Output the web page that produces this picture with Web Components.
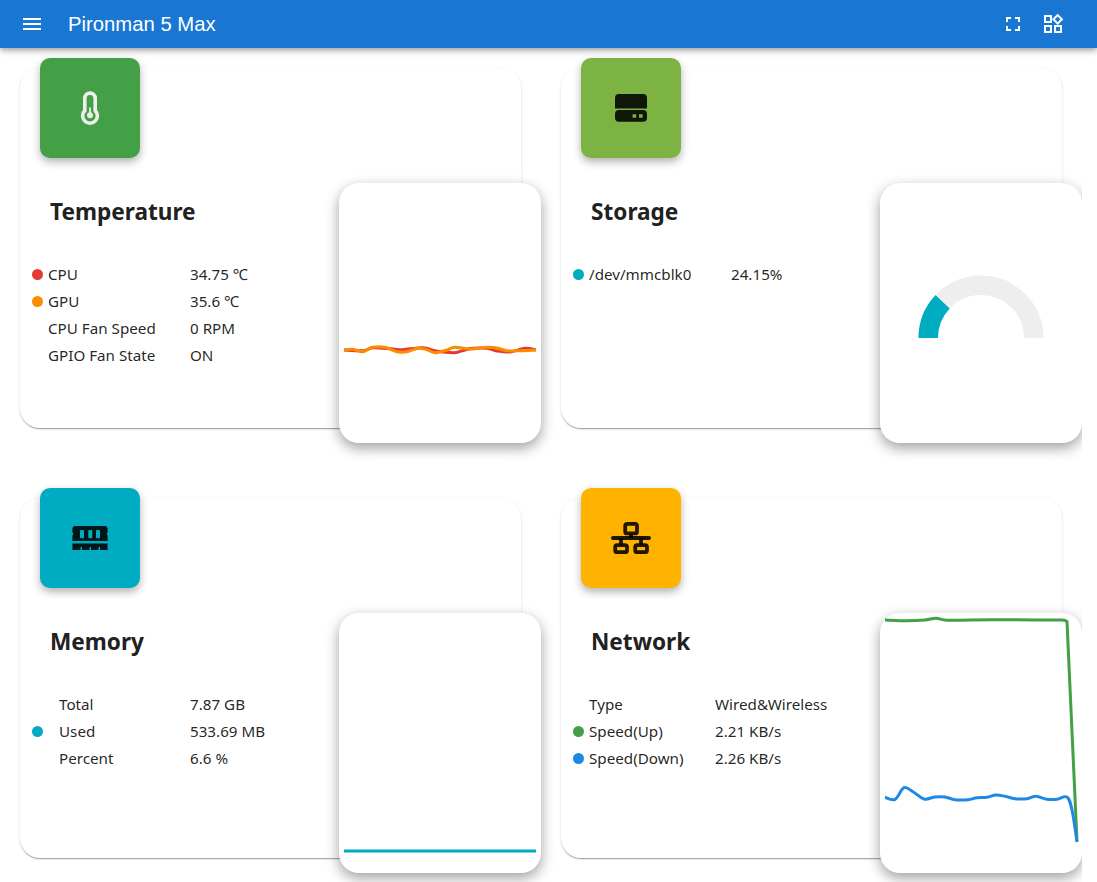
<!DOCTYPE html>
<html>
<head>
<meta charset="utf-8">
<title>Pironman 5 Max</title>
<style>
  html, body { margin: 0; padding: 0; height: 100%; overflow: hidden; background: #fff; }
  body { font-family: "Noto Sans", "Liberation Sans", sans-serif; color: rgba(0,0,0,.87); }
  app-bar { position: relative; z-index: 5; }
  .grid {
    display: grid;
    grid-template-columns: 1fr 1fr;
    align-content: start;
    gap: 70px 40px;
    width: 1082px;
    height: 834px;
    box-sizing: border-box;
    padding: 20px;
    overflow: hidden;
  }
</style>
</head>
<body>
<app-bar>Pironman 5 Max</app-bar>
<div class="grid">
  <dash-card heading="Temperature" color="#43a047" style="--dot-w:16px;--label-w:142px">
    <svg slot="icon" width="48" height="48" viewBox="0 0 48 48" fill="none" stroke="#eee">
      <path stroke-width="3.6" d="M18.800 26.600V14.300a5.200 5.200 0 0 1 10.400 0v12.300a7.400 7.400 0 1 1-10.400 0z"/>
      <path stroke-width="1.800" d="M24 23.500v7"/>
      <circle cx="24" cy="31.300" r="3" fill="#eee" stroke="none"/>
    </svg>
    <stat-row dot="#e53935" label="CPU" value="34.75 ℃"></stat-row>
    <stat-row dot="#fb8c00" label="GPU" value="35.6 ℃"></stat-row>
    <stat-row label="CPU Fan Speed" value="0 RPM"></stat-row>
    <stat-row label="GPIO Fan State" value="ON"></stat-row>
    <line-chart slot="chart" series='[
      {"color":"#e53935","points":[[5,167],[24,167.700],[34,164.700],[54,166],[64,166.700],[84,164.700],[97,168],[115,169.700],[123,167.700],[134,165.300],[148,165.300],[158,168],[171,169],[186,165.300],[197,167]]},
      {"color":"#fb8c00","points":[[5,167],[14,166.300],[24,168.700],[34,164.300],[46,164.300],[58,168.700],[68,168.700],[79,165.300],[87,166.300],[96,169.700],[108,167],[116,164.300],[131,166],[148,164.300],[158,165],[168,167.700],[181,167.700],[197,167]]}
    ]'></line-chart>
  </dash-card>

  <dash-card heading="Storage" color="#7cb342" style="--dot-w:16px;--label-w:142px">
    <svg slot="icon" width="48" height="48" viewBox="0 0 48 48" fill="rgba(0,0,0,.87)">
      <path d="M12 10h24a4 4 0 0 1 4 4v10.600H8V14a4 4 0 0 1 4-4z"/>
      <path fill-rule="evenodd" d="M12 26h24a4 4 0 0 1 4 4v3.800a4 4 0 0 1-4 4H12a4 4 0 0 1-4-4V30a4 4 0 0 1 4-4zm13.600 4.200v3.600h3.600v-3.600zm6.400 0v3.600h3.600v-3.600z"/>
    </svg>
    <stat-row dot="#00acc1" label="/dev/mmcblk0" value="24.15%"></stat-row>
    <gauge-chart slot="chart" percent="24.15"></gauge-chart>
  </dash-card>

  <dash-card heading="Memory" color="#00acc1" style="--dot-w:27px;--label-w:131px">
    <svg slot="icon" width="48" height="48" viewBox="0 0 48 48" fill="rgba(0,0,0,.87)">
      <path fill-rule="evenodd" d="M8 12h32l1.600 2v4.400L40.400 20l1.200 1.600V27H6.400v-5.400L7.600 20l-1.200-1.600V14zM15 16a1 1 0 0 0-1 1v6.300a1 1 0 0 0 1 1h2a1 1 0 0 0 1-1V17a1 1 0 0 0-1-1zm8.300 0a1 1 0 0 0-1 1v6.300a1 1 0 0 0 1 1h2a1 1 0 0 0 1-1V17a1 1 0 0 0-1-1zm7.700 0a1 1 0 0 0-1 1v6.300a1 1 0 0 0 1 1h2a1 1 0 0 0 1-1V17a1 1 0 0 0-1-1z"/>
      <path d="M6.400 29.500h35.200V36H34v-3h-1.500v3h-7.500v-3h-1.500v3h-7.500v-3h-1.500v3H6.400z"/>
    </svg>
    <stat-row label="Total" value="7.87 GB"></stat-row>
    <stat-row dot="#00acc1" label="Used" value="533.69 MB"></stat-row>
    <stat-row label="Percent" value="6.6 %"></stat-row>
    <line-chart slot="chart" series='[{"color":"#00acc1","points":[[5,238],[197,238]]}]'></line-chart>
  </dash-card>

  <dash-card heading="Network" color="#ffb300" style="--dot-w:16px;--label-w:126px">
    <svg slot="icon" width="48" height="48" viewBox="0 0 48 48" fill="none" stroke="rgba(0,0,0,.87)" stroke-width="3.800" stroke-linejoin="round">
      <rect x="18.200" y="9.900" width="11.800" height="9.500" rx="2"/>
      <rect x="8.200" y="31.200" width="11.800" height="7" rx="2"/>
      <rect x="28.200" y="31.200" width="11.800" height="7" rx="2"/>
      <path stroke-linecap="round" d="M5.900 24h36.200"/>
      <path d="M24 19.400V24M14 24v7M34 24v7"/>
    </svg>
    <stat-row label="Type" value="Wired&amp;Wireless"></stat-row>
    <stat-row dot="#43a047" label="Speed(Up)" value="2.21 KB/s"></stat-row>
    <stat-row dot="#1e88e5" label="Speed(Down)" value="2.26 KB/s"></stat-row>
    <line-chart slot="chart" series='[
      {"color":"#43a047","points":[[5,7],[27,7.700],[45,7],[56,5.300],[67,7.300],[90,7],[123,6.700],[157,7],[182,7],[187,8.700],[197,228.700]],"sharp":true},
      {"color":"#1e88e5","points":[[5,184.300],[15,186.300],[24,174.700],[33,178.700],[44,186],[55,184],[65,184],[75,186.700],[88,186.700],[97,184.700],[107,184.300],[116,182],[125,183.300],[135,185.700],[147,185.700],[156,183.300],[167,186.300],[177,186.300],[187,184],[192,197],[197,228.700]]}
    ]'></line-chart>
  </dash-card>
</div>

<script>
class AppBar extends HTMLElement {
  constructor() {
    super();
    this.attachShadow({ mode: 'open' }).innerHTML = `
      <style>
        :host {
          display: flex;
          align-items: center;
          height: 48px;
          background: #1976d2;
          color: #fff;
          box-shadow: 0 2px 4px -1px rgba(0,0,0,.2), 0 4px 5px rgba(0,0,0,.14), 0 1px 10px rgba(0,0,0,.12);
        }
        svg { display: block; fill: #fff; }
        .title { margin-left: 24px; flex: 1; font: 400 20.3px/24px "Liberation Sans", Arial, sans-serif; }
        .menu { margin-left: 20px; }
        .actions { display: flex; gap: 16px; margin-right: 32px; }
      </style>
      <svg class="menu" width="24" height="24" viewBox="0 0 24 24"><path d="M3 18h18v-2H3v2zm0-5h18v-2H3v2zm0-7v2h18V6H3z"/></svg>
      <div class="title"><slot></slot></div>
      <div class="actions">
        <svg width="24" height="24" viewBox="0 0 24 24"><path d="M7 14H5v5h5v-2H7v-3zm-2-4h2V7h3V5H5v5zm12 7h-3v2h5v-5h-2v3zM14 5v2h3v3h2V5h-5z"/></svg>
        <svg width="24" height="24" viewBox="0 0 24 24"><path d="M16.660 4.520l2.830 2.830-2.830 2.830-2.830-2.830 2.830-2.830M9 5v4H5V5h4m10 10v4h-4v-4h4M9 15v4H5v-4h4m7.660-13.310L11 7.340 16.660 13l5.660-5.660-5.660-5.650zM11 3H3v8h8V3zm10 10h-8v8h8v-8zM11 13H3v8h8v-8z"/></svg>
      </div>`;
  }
}

class DashCard extends HTMLElement {
  constructor() {
    super();
    this.attachShadow({ mode: 'open' }).innerHTML = `
      <style>
        :host {
          display: block;
          position: relative;
          height: 360px;
          box-sizing: border-box;
          padding: 124px 12px 0;
          border-radius: 20px;
          background: #fff;
          box-shadow: 0 2px 1px -1px rgba(0,0,0,.2), 0 1px 1px rgba(0,0,0,.14), 0 1px 3px rgba(0,0,0,.12);
        }
        .icon {
          position: absolute;
          top: -10px;
          left: 20px;
          width: 100px;
          height: 100px;
          display: flex;
          align-items: center;
          justify-content: center;
          border-radius: 10px;
          box-shadow: 0 4px 8px rgba(0,0,0,.3);
        }
        h2 {
          margin: 0 0 29px 18px;
          font: 700 22.6px/40px "Noto Sans", sans-serif;
          color: #212121;
        }
        .chart { position: absolute; right: -20px; bottom: -15px; z-index: 1; }
      </style>
      <div class="icon"><slot name="icon"></slot></div>
      <h2></h2>
      <slot></slot>
      <div class="chart"><slot name="chart"></slot></div>`;
  }
  connectedCallback() {
    this.shadowRoot.querySelector('h2').textContent = this.getAttribute('heading');
    this.shadowRoot.querySelector('.icon').style.background = this.getAttribute('color');
  }
}

class StatRow extends HTMLElement {
  constructor() {
    super();
    this.attachShadow({ mode: 'open' }).innerHTML = `
      <style>
        :host {
          display: grid;
          grid-template-columns: var(--dot-w) var(--label-w) 1fr;
          align-items: center;
          height: 27px;
          font: 400 15.2px/27px "Noto Sans", sans-serif;
          color: rgba(0,0,0,.87);
          white-space: nowrap;
        }
        i { display: block; width: 11px; height: 11px; border-radius: 50%; }
      </style>
      <span><i></i></span><span class="label"></span><span class="value"></span>`;
  }
  connectedCallback() {
    const s = this.shadowRoot;
    s.querySelector('.label').textContent = this.getAttribute('label');
    s.querySelector('.value').textContent = this.getAttribute('value');
    s.querySelector('i').style.background = this.getAttribute('dot') || 'transparent';
  }
}

const panelCss = `
  :host {
    display: block;
    width: 202px;
    height: 260px;
    border-radius: 20px;
    background: #fff;
    box-shadow: 0 5px 14px rgba(0,0,0,.38);
  }
  svg { display: block; }`;

// catmull-rom through the points, keeps the lines soft like the real chart
function smooth(pts, sharp) {
  let d = `M${pts[0][0]} ${pts[0][1]}`;
  for (let i = 0; i < pts.length - 1; i++) {
    const p0 = pts[i - 1] || pts[i], p1 = pts[i], p2 = pts[i + 1];
    let p3 = pts[i + 2] || p2;
    if (sharp && i === pts.length - 2) { d += `L${p2[0]} ${p2[1]}`; continue; }
    if (sharp && i === pts.length - 3) p3 = p2;
    const c1 = [p1[0] + (p2[0] - p0[0]) / 6, p1[1] + (p2[1] - p0[1]) / 6];
    const c2 = [p2[0] - (p3[0] - p1[0]) / 6, p2[1] - (p3[1] - p1[1]) / 6];
    d += `C${c1[0]} ${c1[1]} ${c2[0]} ${c2[1]} ${p2[0]} ${p2[1]}`;
  }
  return d;
}

class LineChart extends HTMLElement {
  constructor() {
    super();
    this.attachShadow({ mode: 'open' });
  }
  connectedCallback() {
    const series = JSON.parse(this.getAttribute('series'));
    const paths = series.map(s =>
      `<path d="${smooth(s.points, s.sharp)}" fill="none" stroke="${s.color}" stroke-width="3"/>`).join('');
    this.shadowRoot.innerHTML = `<style>${panelCss}</style>
      <svg width="202" height="260" viewBox="0 0 202 260">${paths}</svg>`;
  }
}

class GaugeChart extends HTMLElement {
  constructor() {
    super();
    this.attachShadow({ mode: 'open' });
  }
  connectedCallback() {
    const p = parseFloat(this.getAttribute('percent'));
    const arc = 'M48.200 155a52.750 52.750 0 0 1 105.500 0';
    this.shadowRoot.innerHTML = `<style>${panelCss}</style>
      <svg width="202" height="260" viewBox="0 0 202 260" fill="none" stroke-width="19.500">
        <path d="${arc}" pathLength="100" stroke="#eee" stroke-dasharray="0 ${p + 0.4} 100 100"/>
        <path d="${arc}" pathLength="100" stroke="#00acc1" stroke-dasharray="${p} 100"/>
      </svg>`;
  }
}

customElements.define('app-bar', AppBar);
customElements.define('dash-card', DashCard);
customElements.define('stat-row', StatRow);
customElements.define('line-chart', LineChart);
customElements.define('gauge-chart', GaugeChart);
</script>
</body>
</html>
